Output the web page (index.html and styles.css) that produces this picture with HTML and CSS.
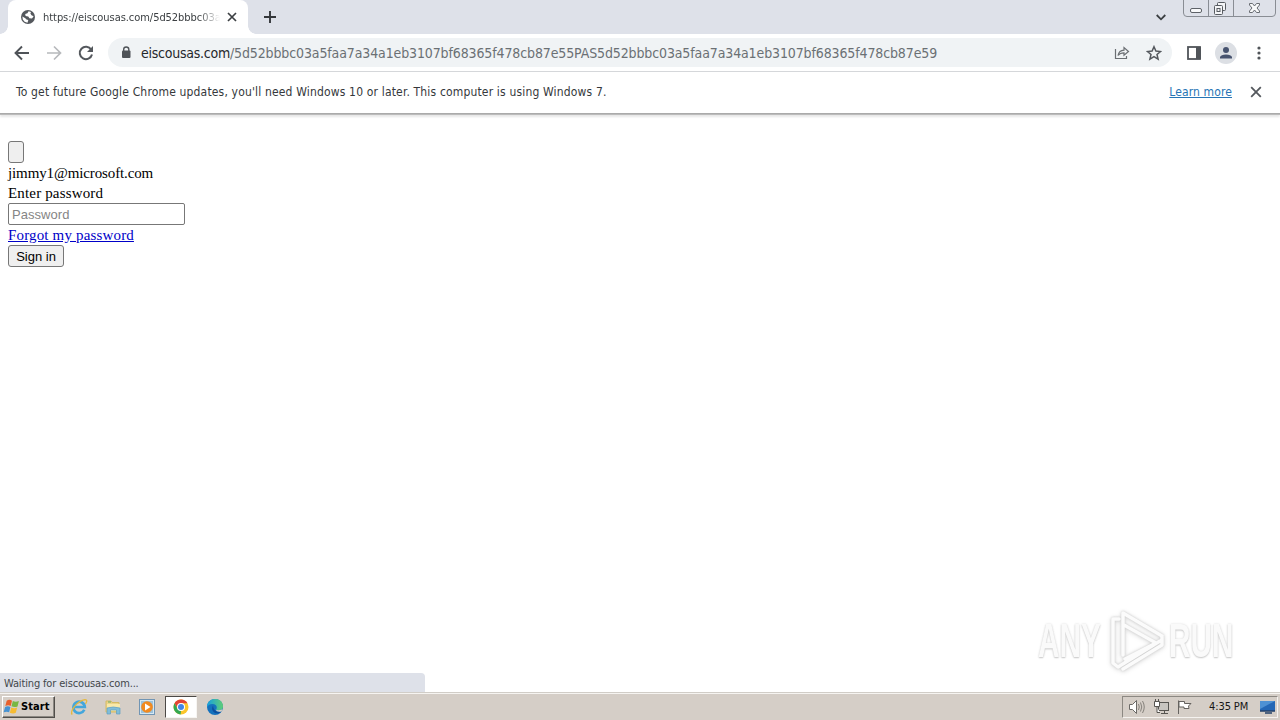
FILE: index.html
```html
<!DOCTYPE html>
<html lang="en">
<head>
<meta charset="utf-8">
<title>eiscousas.com</title>
<link rel="stylesheet" href="styles.css">
</head>
<body>
<div class="screen">
  <div class="tabstrip">
    <div class="tab">
      <svg class="globe" width="14" height="14" viewBox="0 0 14 14"><circle cx="7" cy="7" r="7" fill="#54585d"/><path d="M7.6 1.3 6.4 3.2 4.2 4.1 4.6 6 7.3 6.4 8.4 8.2 11 8.6 12.6 6.2 10.5 5.3 9.4 3.5 10 1.9ZM1.4 6.5 4.3 8.3 5.5 9.6 7.3 10.1 6.5 12.7 3.6 11.8 1.8 9.6Z" fill="#fff"/></svg>
      <span class="tab-title">https://eiscousas.com/5d52bbbc03a</span>
      <svg class="tab-close" width="10" height="10" viewBox="0 0 10 10"><path d="M1 1 9 9M9 1 1 9" stroke="#3c4043" stroke-width="1.7"/></svg>
    </div>
    <svg class="new-tab" width="12" height="12" viewBox="0 0 12 12"><path d="M6 0V12M0 6H12" stroke="#34373b" stroke-width="1.9"/></svg>
    <svg class="chevron" width="10" height="7" viewBox="0 0 10 7"><path d="M.7 1 5 5.3 9.3 1" fill="none" stroke="#3c4043" stroke-width="1.8"/></svg>
    <svg class="window-buttons" width="94" height="18" viewBox="0 0 94 18"><path d="M.5 0V13Q.5 16.5 4 16.5H89Q92.500 16.500 92.500 13V0M25.500 0V16M50.500 0V16" fill="none" stroke="#898d94"/><rect x="7.500" y="8.500" width="11" height="4" rx="1.500" fill="#f8f9fa" stroke="#5e6268"/><g fill="#f4f5f7" stroke="#575b61"><rect x="34.500" y="2.500" width="8" height="8" rx="1"/><rect x="31.500" y="5.500" width="8" height="9" rx="1"/><rect x="34" y="8.500" width="3" height="3"/></g><path d="M66.500 3.500H69.500L71.500 6 73.500 3.500H76.500V5L74 8 76.500 11V12.500H73.500L71.500 10 69.500 12.500H66.500V11L69 8 66.500 5Z" fill="#f8f9fa" stroke="#686c72"/></svg>
  </div>
  <div class="toolbar">
    <svg class="nav-icon" width="16" height="16" viewBox="0 0 16 16"><path d="M15 8H2M8 1.500 1.500 8 8 14.500" fill="none" stroke="#4f5358" stroke-width="1.900"/></svg>
    <svg class="nav-icon" width="16" height="16" viewBox="0 0 16 16"><path d="M1 8H14M8 1.500 14.500 8 8 14.500" fill="none" stroke="#b7b9bc" stroke-width="1.700"/></svg>
    <svg class="nav-icon" width="16" height="16" viewBox="0 0 16 16"><path d="M13.200 4.600A6.200 6.200 0 1 0 14 9.500" fill="none" stroke="#54585d" stroke-width="2"/><path d="M15 1V7H9Z" fill="#54585d"/></svg>
    <div class="omnibox">
      <svg class="lock" width="10" height="13" viewBox="0 0 10 13"><rect x="1" y="4.500" width="8.500" height="7.500" rx="1" fill="#4f5358"/><path d="M2.700 5V3.200Q2.700 1 5.200 1T7.800 3.200V5" fill="none" stroke="#4f5358" stroke-width="1.400"/></svg>
      <span class="url"><span class="host">eiscousas.com</span><span class="path">/5d52bbbc03a5faa7a34a1eb3107bf68365f478cb87e55PAS5d52bbbc03a5faa7a34a1eb3107bf68365f478cb87e59</span></span>
      <svg class="share" width="16" height="14" viewBox="0 0 16 14"><path d="M1.500 3V12.500H12.500V10M4 9.500Q5 4.500 10 4.200V1.500L14.500 5.500 10 9.300V6.800Q6 6.800 4 9.500Z" fill="none" stroke="#6b6f73" stroke-width="1.200"/></svg>
      <svg class="star" width="16" height="16" viewBox="0 0 16 16"><path d="M8 1.700 9.900 6.100 14.500 6.500 11 9.500 12.100 14.100 8 11.700 3.900 14.100 5 9.500 1.500 6.500 6.100 6.100Z" fill="none" stroke="#54585d" stroke-width="1.500"/></svg>
    </div>
    <svg class="panel" width="14" height="14" viewBox="0 0 14 14"><rect x="1" y="1" width="12" height="12" fill="#fff" stroke="#505459" stroke-width="1.800"/><path d="M9 1H14V13H9Z" fill="#505459"/></svg>
    <svg class="avatar" width="22" height="22" viewBox="0 0 22 22"><circle cx="11" cy="11" r="11" fill="#dcdfe4"/><circle cx="11" cy="8" r="3" fill="#47536f"/><path d="M5 16.500V15Q6 12.500 11 12.500T17 15V16.500Z" fill="#47536f"/></svg>
    <svg class="menu" width="4" height="14" viewBox="0 0 4 14"><g fill="#505459"><circle cx="2" cy="2" r="1.600"/><circle cx="2" cy="7" r="1.600"/><circle cx="2" cy="12" r="1.600"/></g></svg>
  </div>
  <div class="infobar">
    <span class="info-text">To get future Google Chrome updates, you'll need Windows 10 or later. This computer is using Windows 7.</span>
    <a class="learn">Learn more</a>
    <svg class="info-close" width="12" height="12" viewBox="0 0 12 12"><path d="M1.200 1.200 10.800 10.800M10.800 1.200 1.200 10.800" stroke="#54585d" stroke-width="1.800"/></svg>
  </div>
  <div class="page">
    <button class="back-button"></button>
    <div class="line email">jimmy1@microsoft.com</div>
    <div class="line enter">Enter password</div>
    <input class="password" type="password" placeholder="Password">
    <div class="line"><a class="forgot" href="#">Forgot my password</a></div>
    <button class="sign-in">Sign in</button>
  </div>
  <div class="taskbar">
    <div class="start">
      <svg width="18" height="18" viewBox="0 0 17 16"><path d="M3.500 2Q6 .5 8.500 2L7.300 7Q5 5.800 2.200 7Z" fill="#e8602c"/><path d="M9.300 2.400Q12 3.700 15 2.400L13.700 7.500Q11 8.600 8 7.400Z" fill="#78b743"/><path d="M2 8Q4.500 6.800 7 8L5.800 13Q3.500 11.800.6 13Z" fill="#4792d2"/><path d="M7.800 8.400Q10.500 9.700 13.400 8.500L12.100 13.500Q9.500 14.600 6.500 13.400Z" fill="#f6bb32"/></svg>
      <span class="start-label">Start</span>
    </div>
    <svg class="task-icon ie" width="18" height="18" viewBox="0 0 18 18"><path d="M14.300 11.800A5.700 5.700 0 1 1 14.800 9H4" fill="none" stroke="#43a6dc" stroke-width="2.700"/><path d="M2.300 16.500C-1 14 7 3 15 1.700 18 1.700 16.500 4.500 15.500 5.800" fill="none" stroke="#e5b83d" stroke-width="1.300"/></svg>
    <svg class="task-icon folder" width="18" height="18" viewBox="0 0 18 18"><path d="M2 3H7L8 4.500H15V14H2Z" fill="#ecd588" stroke="#d4ba65"/><path d="M3 6H16V13H3Z" fill="#f8e9aa"/><path d="M3 10Q9 8 16 10V16H12.500V12H6.500V16H3Z" fill="#80bdd9" stroke="#609fc2" stroke-width=".7"/><path d="M4 4H7" stroke="#67a96b"/></svg>
    <svg class="task-icon media" width="18" height="18" viewBox="0 0 18 18"><rect x="1.500" y="1.500" width="15" height="15" fill="#d5e8f3" stroke="#7195b4"/><rect x="3" y="3" width="12" height="12" fill="#9cc2dc"/><circle cx="9" cy="9" r="5.800" fill="#f18a20"/><path d="M7 5.500 12.500 9 7 12.500Z" fill="#fff"/></svg>
    <div class="chrome-task"><svg width="18" height="18" viewBox="0 0 18 18"><circle cx="9" cy="9" r="7.500" fill="#fbc52b"/><path d="M2.500 5.300A7.500 7.500 0 0 1 15.500 5.300H9L5.900 11.100Z" fill="#e34436"/><path d="M2.500 5.300 5.800 11.200 9 12.700 8.600 16.500A7.500 7.500 0 0 1 2.500 5.300Z" fill="#33a852"/><circle cx="9" cy="9" r="4" fill="#fff"/><circle cx="9" cy="9" r="3" fill="#4285e6"/></svg></div>
    <svg class="task-icon edge" width="18" height="18" viewBox="0 0 18 18"><defs><linearGradient id="edge-top"><stop stop-color="#159fdf"/><stop offset="1" stop-color="#60ce76"/></linearGradient></defs><circle cx="9" cy="9" r="8" fill="#1471bd"/><path d="M1 9C1-1.500 17-1.500 17 8.500 17 12.500 12 13 10 11.500 12 9 10 6 6.500 6 3.500 6 1.800 7.500 1 9Z" fill="url(#edge-top)"/><path d="M7 7.500Q4.500 12 9 15 13 16.300 15.500 13.500 11 14.700 8.700 12 7 10 7 7.500Z" fill="#0d4f9e"/><path d="M9.500 11.500Q12 13 16.500 11.200L15.500 13.400Q11 14.600 9.500 11.500Z" fill="#d7d0c8"/></svg>
    <div class="tray">
      <svg class="speaker" width="18" height="16" viewBox="0 0 18 16"><path d="M1.500 5.500H4.500L8.500 1.500V14.500L4.500 10.500H1.500Z" fill="#fff" stroke="#6b6966"/><path d="M10.500 5Q12 8 10.500 11M12.500 3.500Q15 8 12.500 12.500M14.500 2Q18 8 14.500 14" fill="none" stroke="#85817b"/></svg>
      <svg class="network" width="17" height="16" viewBox="0 0 17 16"><rect x="5.500" y="3.500" width="10" height="8" fill="#c8c5c0" stroke="#575551"/><path d="M8 14.500H15M11.500 12V14.500M1.500 2.500H6.500V7.500H1.500ZM4 8V13.500H7" fill="#fff" stroke="#575551"/><path d="M2.500 0V3M5.500 0V3" stroke="#575551"/></svg>
      <svg class="flag" width="17" height="16" viewBox="0 0 17 16"><path d="M2.500 15V1.500M3 2.500H8.500V4.500H15L12.500 7 13 9.500H8V8H3Z" fill="#fff" stroke="#65625f"/></svg>
      <span class="clock">4:35 PM</span>
      <svg class="desktop" width="17" height="14" viewBox="0 0 17 14"><path d="M1 1H16V11H1Z" fill="#2467b6"/><path d="M1 1H16L1 9Z" fill="#4e91d4"/><path d="M1 11H16M6 13H13" stroke="#254269" stroke-width="1.500"/></svg>
    </div>
  </div>
  <div class="status">Waiting for eiscousas.com...</div>
  <div class="watermark"><span class="mark-any">ANY</span><svg class="mark-play" width="62" height="66" viewBox="0 0 62 66"><path d="M13 12H7V56L12 60 54 34M17 48V6L56 29M18 18 50 36 19 52M17 62 56 38V30" fill="none" stroke="#fbfbfb" stroke-width="3.500" stroke-linejoin="round" stroke-linecap="round"/></svg><span class="mark-run">RUN</span></div>
</div>
</body>
</html>
```
FILE: styles.css
```css
* { box-sizing: border-box; }
body { margin: 0; overflow: hidden; font-family: "DejaVu Sans Condensed", "DejaVu Sans", sans-serif; }
svg { display: block; flex: none; }
.screen { position: relative; width: 1280px; height: 720px; display: flex; flex-direction: column; background: #fff; overflow: hidden; }
.tabstrip { height: 34px; background: #dee1e9; display: flex; align-items: center; padding-left: 8px; flex: none; }
.tab { width: 240px; height: 34px; background: #fff; border-radius: 8px 8px 0 0; display: flex; align-items: center; padding-left: 13px; position: relative; }
.tab::before, .tab::after { content: ""; position: absolute; bottom: 0; width: 8px; height: 8px; }
.tab::before { left: -8px; background: radial-gradient(circle at 0 0, transparent 7.5px, #fff 8px); }
.tab::after { right: -8px; background: radial-gradient(circle at 100% 0, transparent 7.5px, #fff 8px); }
.tab-title { margin-left: 8px; width: 177px; overflow: hidden; white-space: nowrap; font-size: 11px; letter-spacing: -.05px; color: #3c4043; mask-image: linear-gradient(90deg, #000 155px, transparent 177px); }
.tab-close { margin-left: 7px; }
.new-tab { margin-left: 16px; }
.chevron { margin-left: auto; }
.window-buttons { margin-left: 17px; margin-right: 3px; align-self: flex-start; }
.toolbar { height: 38px; border-bottom: 1px solid #d5d7da; display: flex; align-items: center; padding-left: 14px; flex: none; }
.nav-icon { margin-right: 16px; }
.omnibox { height: 29px; width: 1064px; margin-left: -2px; border-radius: 15px; background: #f0f3f5; display: flex; align-items: center; padding: 0 10px 0 13px; }
.url { margin-left: 10px; font-size: 14px; white-space: nowrap; color: #6b7074; width: 940px; }
.host { color: #24272b; letter-spacing: -.25px; }
.path { letter-spacing: -.122px; }
.share { margin-left: auto; }
.star { margin-left: 16px; }
.panel { margin-left: 15px; }
.avatar { margin-left: 14px; }
.menu { margin-left: 20px; }
.infobar { height: 41px; display: flex; align-items: center; padding: 0 18px 2px 16px; font-size: 12px; color: #35383b; box-shadow: 0 1px 0 #aaa, 0 2px 0 #bbb, 0 4px 2px #e7e7e7; position: relative; flex: none; }
.info-text { white-space: nowrap; letter-spacing: .165px; }
.learn { margin-left: auto; color: #2674b5; text-decoration: underline; white-space: nowrap; letter-spacing: .12px; }
.info-close { margin-left: 18px; }
.page { flex: 1; padding: 28px 8px 0; font-family: "Liberation Serif", serif; font-size: 15px; color: #000; display: flex; flex-direction: column; align-items: flex-start; }
.back-button, .sign-in { border: 1px solid #777; border-radius: 3px; background: #efefef; height: 22px; padding: 0; }
.back-button { width: 16px; }
.line { height: 20px; line-height: 21px; white-space: nowrap; letter-spacing: .16px; }
.email { letter-spacing: -.12px; }
.password { width: 177px; height: 22px; border: 1px solid #777; border-radius: 2px; padding: 1px 3px; font: 13px "Liberation Sans", sans-serif; }
.password::placeholder { color: #858585; letter-spacing: .05px; }
.forgot { color: #0000c8; }
.sign-in { width: 56px; font: 13px "Liberation Sans", sans-serif; color: #000; }
.taskbar { height: 28px; background: #d5cec7; border-top: 1px solid #d1cdc7; box-shadow: inset 0 1px #f6f4f1; display: flex; align-items: center; padding: 0 2px; flex: none; }
.start { width: 53px; height: 22px; border: 1px solid; border-color: #fff #514e4a #514e4a #fff; box-shadow: inset -1px -1px #8c8882; display: flex; align-items: center; }
.start-label { font-size: 11px; font-weight: 700; color: #000; letter-spacing: .1px; }
.ie { margin-left: 15px; }
.folder { margin-left: 16px; }
.media { margin-left: 16px; }
.chrome-task { width: 32px; height: 22px; margin: 0 9px; background: #fff; border: 1px solid; border-color: #4c4946 #f7f5f2 #f7f5f2 #4c4946; display: flex; align-items: center; justify-content: center; }
.tray { margin-left: auto; width: 156px; height: 22px; border: 1px solid; border-color: #8c8882 #f5f2ef #f5f2ef #8c8882; display: flex; align-items: center; padding-left: 5px; }
.network { margin-left: 7px; }
.flag { margin-left: 6px; }
.clock { margin-left: 16px; width: 42px; font-size: 11px; color: #171615; white-space: nowrap; letter-spacing: -.1px; }
.desktop { margin-left: 8px; }
.status { position: absolute; left: 0; top: 673px; width: 425px; height: 19px; background: #dee1e9; border-radius: 0 4px 0 0; padding-left: 4px; font-size: 11px; line-height: 21px; letter-spacing: -.15px; color: #43474b; }
.watermark { position: absolute; left: 1038px; top: 608px; width: 198px; height: 66px; display: flex; align-items: center; color: #fafafa; font: 700 48px/66px "Liberation Sans", sans-serif; text-shadow: 0 1px 2px #c9c9c9, 0 0 3px #ddd; }
.mark-play { margin-top: -2px; filter: drop-shadow(0 0 1px #ccc) drop-shadow(0 1px 2px #ddd); }
.mark-any, .mark-run { display: block; width: 68px; flex: none; transform: scaleX(.62); transform-origin: left; }
.mark-run { margin-left: 1px; }
```
